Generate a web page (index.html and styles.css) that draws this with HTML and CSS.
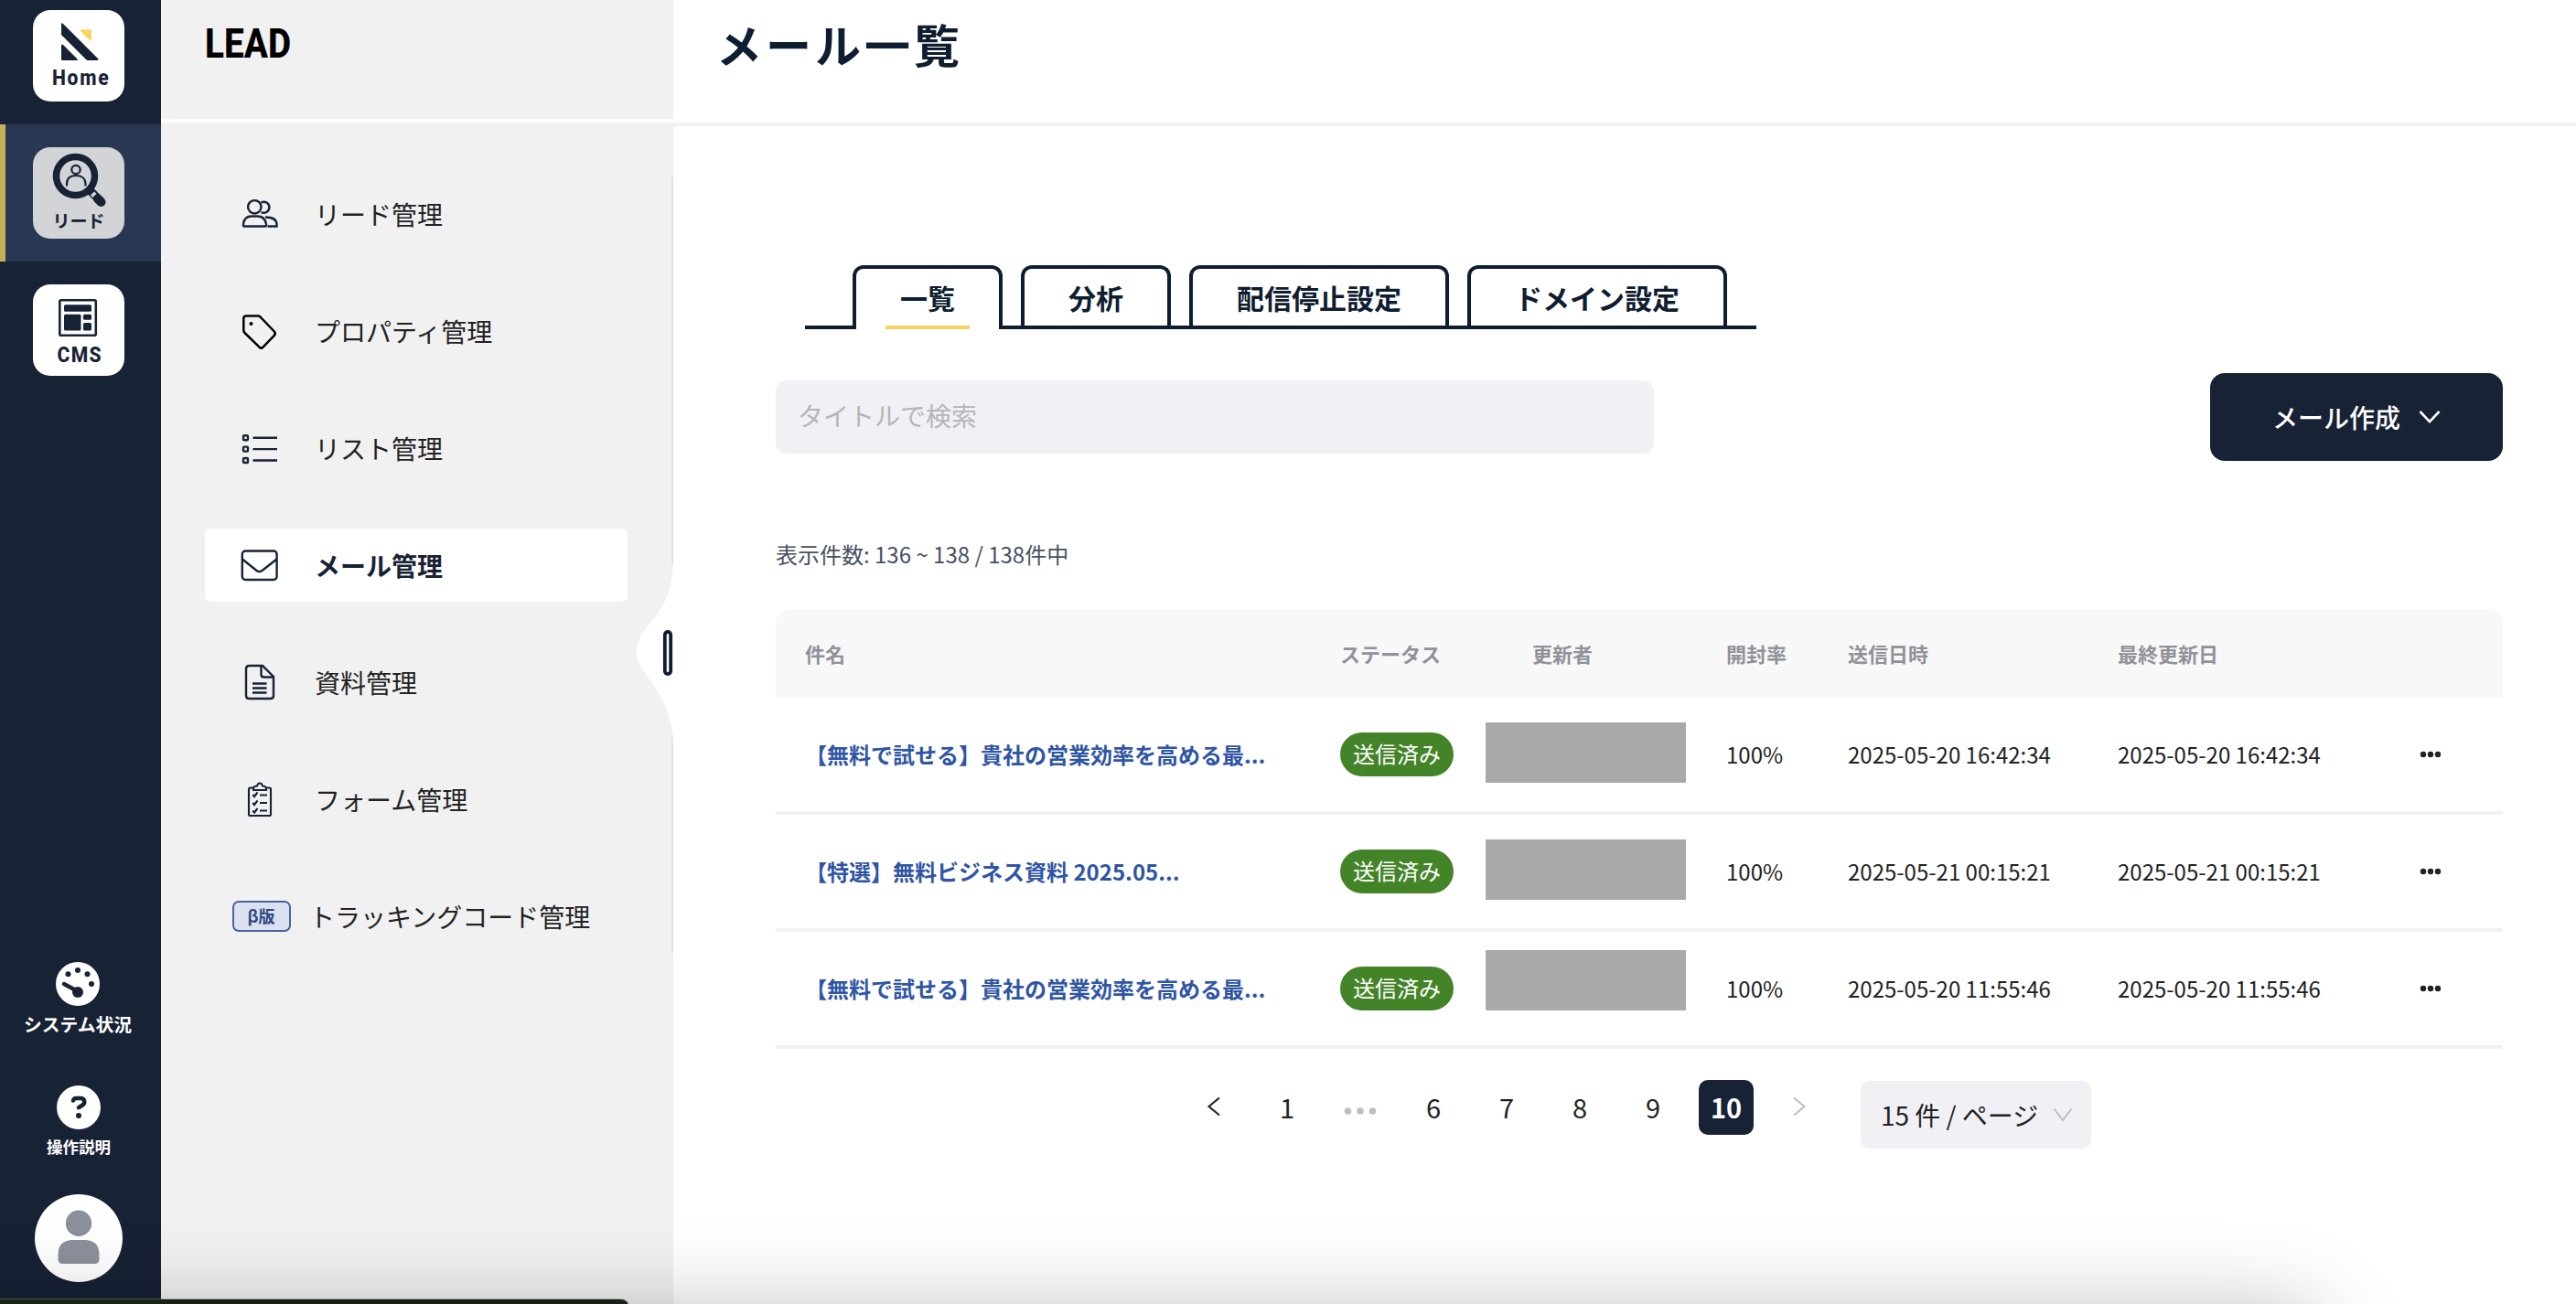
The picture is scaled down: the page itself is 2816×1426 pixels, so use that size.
FILE: index.html
```html
<!DOCTYPE html>
<html lang="ja">
<head>
<meta charset="utf-8">
<title>メール一覧</title>
<link rel="stylesheet" href="styles.css">
</head>
<body>
<div class="app">
  <nav class="rail">
    <a class="rail-item rail-home"><span class="tile">
      <svg class="tile-icon" width="100" height="100" viewBox="0 0 100 100">
        <path d="M31 15.500Q31 13.500 33 15L71.500 53.500Q72 55 70 55H60.500Q59 55 58 54L31 27Z" fill="#182235"/>
        <path d="M31 39Q31 36.500 33 38L48.500 53.500Q49.500 55 48 55H32Q31 55 31 54Z" fill="#182235"/>
        <path d="M52 21.500H63Q64 21.500 64 22.500V33Q63.500 34 62 33L52 23Q51 21.500 52 21.500Z" fill="#f6d560"/>
      </svg><span class="tile-label latin">Home</span></span></a>
    <a class="rail-item active"><span class="tile">
      <svg class="tile-icon" width="100" height="100" viewBox="0 0 100 100" fill="none" stroke="#182235">
        <circle cx="46.500" cy="31.500" r="21" stroke-width="7.500"/>
        <circle cx="47" cy="24.500" r="4.700" stroke-width="2.200"/>
        <path d="M37 42.500V40C37 34 41 31 47 31S57.500 34 57.500 40v2.500" stroke-width="2.200"/>
        <path d="M61 46l14 14" stroke-width="9"/>
        <path d="M65 50.500l2.500 2.500" stroke="#d3d4d8" stroke-width="6"/>
        <path d="M71 56.500l3.500 3.500" stroke-width="10" stroke-linecap="round"/>
      </svg><span class="tile-label kana">リード</span></span></a>
    <a class="rail-item"><span class="tile">
      <svg class="tile-icon" width="100" height="100" viewBox="0 0 100 100" fill="#182235">
        <rect x="29.300" y="17.300" width="39.500" height="38.500" rx="1.500" fill="none" stroke="#182235" stroke-width="2.600"/>
        <rect x="34" y="22.300" width="30" height="7.500" rx="1.500"/><rect x="34" y="32.800" width="18.500" height="17.700" rx="1.500"/>
        <rect x="55" y="32.800" width="9" height="6" rx="1.500"/><rect x="55" y="42" width="9" height="8.500" rx="1.500"/>
      </svg><span class="tile-label latin cms">CMS</span></span></a>
    <div class="rail-foot">
      <a class="rail-link">
        <svg class="gauge" width="48" height="48" viewBox="0 0 48 48"><circle cx="24" cy="24" r="24" fill="#fff"/>
          <g fill="#182235"><circle cx="24" cy="9" r="3"/><circle cx="13.500" cy="13.300" r="3"/><circle cx="34.500" cy="13.300" r="3"/><circle cx="39" cy="24" r="3"/><circle cx="24" cy="33" r="6"/></g>
          <path d="M9 24l13 7" stroke="#182235" stroke-width="4.500" stroke-linecap="round"/></svg>
        <span class="rail-text">システム状況</span></a>
      <a class="rail-link help">
        <svg width="48" height="48" viewBox="0 0 48 48"><circle cx="24" cy="24" r="24" fill="#fff"/>
          <path d="M18 16.500q.6-2.500 3.500-2.500h4.500c4.800 0 5.800 5.800 1.500 8l-3.500 2.200" fill="none" stroke="#182235" stroke-width="4.500" stroke-linecap="round" stroke-linejoin="round"/><circle cx="24" cy="33" r="3" fill="#182235"/></svg>
        <span class="rail-text small">操作説明</span></a>
      <svg class="avatar" width="96" height="96" viewBox="0 0 96 96"><circle cx="48" cy="48" r="48" fill="#fff"/><g fill="#8c909b"><circle cx="48" cy="31.700" r="14.200"/><path d="M40 50h16q14.500 1 14.500 16v5q0 5-5 5h-35q-5 0-5-5v-5q0-15 14.500-16z"/></g></svg>
    </div>
  </nav>

  <aside class="sidebar">
    <div class="sidebar-head"><span class="brand">LEAD</span></div>
    <ul class="menu">
      <li class="menu-item"><span class="menu-icon"><svg width="44" height="44" viewBox="0 0 44 44" fill="none" stroke="#182235" stroke-width="2.400">
        <ellipse cx="16.300" cy="13.300" rx="7.200" ry="7.200"/><path d="M4 33.500v-1.500Q5 23.500 13 23.500h6.500q8 0 9.500 8.500v1.500q0 1-1 1H5q-1 0-1-1z"/>
        <path d="M23.500 8.500a6 6 0 1 1 0 10.500M28 24.500c7 0 12.500 1.500 12.500 8v2h-10"/></svg></span><span>リード管理</span></li>
      <li class="menu-item"><span class="menu-icon"><svg width="44" height="44" viewBox="0 0 44 44" fill="none" stroke="#000" stroke-width="2.500">
        <path d="M7 4.500h13q1.500 0 2.500 1l15.300 16q2 2.200 0 4.300l-12.500 13q-1.700 1.700-3.500 0L5.500 23q-1.200-1.200-1.200-2.700V7.200Q4.300 4.500 7 4.500Z"/><circle cx="12.500" cy="13" r="2" fill="#000" stroke="none"/></svg></span><span>プロパティ管理</span></li>
      <li class="menu-item"><span class="menu-icon"><svg width="44" height="44" viewBox="0 0 44 44" fill="none" stroke="#182235" stroke-width="2.400">
        <rect x="4" y="7.200" width="5" height="5" rx="1"/><rect x="4" y="19.600" width="5" height="5" rx="1"/><rect x="4" y="32" width="5" height="5" rx="1"/><path d="M14.500 9.700H41M14.500 22.100H41M14.500 34.500H41"/></svg></span><span>リスト管理</span></li>
      <li class="menu-item selected"><span class="menu-icon"><svg width="44" height="44" viewBox="0 0 44 44" fill="none" stroke="#182235" stroke-width="2.400">
        <rect x="2.800" y="5.500" width="37.800" height="31.500" rx="3.500"/><path d="M3 14.500l15.500 12.500q3 2.200 6 0L40.500 14.500"/></svg></span><span>メール管理</span></li>
      <li class="menu-item"><span class="menu-icon"><svg width="44" height="44" viewBox="0 0 44 44" fill="none" stroke="#182235" stroke-width="2.400">
        <path d="M25 3H10.500Q7 3 7 6.500v29Q7 39 10.500 39h23Q37 39 37 35.500V15z"/><path d="M23.500 3v9.500q0 3 3 3H37M14 22.500h15.500M14 27.500h15.500M14 32.500h15.500"/></svg></span><span>資料管理</span></li>
      <li class="menu-item"><span class="menu-icon"><svg width="44" height="44" viewBox="0 0 44 44" fill="none" stroke="#182235" stroke-width="2.100">
        <path d="M14.500 8.500h-3Q10 8.500 10 10v27.500q0 1.500 1.500 1.500h21q1.500 0 1.500-1.500V10q0-1.500-1.500-1.500h-3"/><path d="M15 11V8.500q1-2 4-2 .7-3 3-3t3 3q3 0 4 2V11z"/><path d="M14.300 16l1.800 2 3.400-4.500M14.300 25l1.800 2 3.400-4.500M14.300 33.500l1.800 2 3.400-4.500M22 16.500h8M22 25h8M22 33.500h8"/></svg></span><span>フォーム管理</span></li>
      <li class="menu-item beta"><span class="beta-tag">β版</span><span>トラッキングコード管理</span></li>
    </ul>
    <svg class="notch" width="42" height="848" viewBox="0 0 42 848"><path d="M41 0V424M41 609V848" stroke="#e3e3e3" stroke-width="2"/>
      <path d="M42 415C42 460 26 476 13 492C-2 510-2 526 13 545C26 562 42 586 42 620Z" fill="#fff"/><rect x="32.800" y="497" width="6.400" height="46" rx="3.200" fill="#fff" stroke="#0f1d30" stroke-width="3.800"/></svg>
  </aside>

  <main class="main">
    <header class="page-head"><h1>メール一覧</h1></header>
    <div class="tabs"><a class="tab current">一覧</a><a class="tab">分析</a><a class="tab">配信停止設定</a><a class="tab">ドメイン設定</a></div>
    <div class="toolbar"><div class="search">タイトルで検索</div>
      <div class="create"><span>メール作成</span><svg width="24" height="16" viewBox="0 0 24 16" fill="none" stroke="#fff" stroke-width="2.600"><path d="M1.500 2L12 13.200 22.500 2"/></svg></div></div>
    <p class="count">表示件数: 136 ~ 138 / 138件中</p>
    <div class="table">
      <div class="row head"><span>件名</span><span>ステータス</span><span class="updater">更新者</span><span>開封率</span><span>送信日時</span><span>最終更新日</span><span></span></div>
      <div class="row"><span class="subject">【無料で試せる】貴社の営業効率を高める最...</span><span class="status">送信済み</span><span class="mask"></span><span>100%</span><span>2025-05-20 16:42:34</span><span>2025-05-20 16:42:34</span><svg width="24" height="8" viewBox="0 0 24 8" fill="#222"><circle cx="4" cy="4" r="3.200"/><circle cx="12" cy="4" r="3.200"/><circle cx="20" cy="4" r="3.200"/></svg></div>
      <div class="row"><span class="subject">【特選】無料ビジネス資料 2025.05...</span><span class="status">送信済み</span><span class="mask"></span><span>100%</span><span>2025-05-21 00:15:21</span><span>2025-05-21 00:15:21</span><svg width="24" height="8" viewBox="0 0 24 8" fill="#222"><circle cx="4" cy="4" r="3.200"/><circle cx="12" cy="4" r="3.200"/><circle cx="20" cy="4" r="3.200"/></svg></div>
      <div class="row"><span class="subject">【無料で試せる】貴社の営業効率を高める最...</span><span class="status">送信済み</span><span class="mask raised"></span><span>100%</span><span>2025-05-20 11:55:46</span><span>2025-05-20 11:55:46</span><svg width="24" height="8" viewBox="0 0 24 8" fill="#222"><circle cx="4" cy="4" r="3.200"/><circle cx="12" cy="4" r="3.200"/><circle cx="20" cy="4" r="3.200"/></svg></div>
    </div>
    <div class="pager">
      <span class="page arrow"><svg width="16" height="22" viewBox="0 0 16 22" fill="none" stroke="#222" stroke-width="2.100"><path d="M14 1.500L2.500 11 14 20.500"/></svg></span>
      <span class="page">1</span>
      <span class="page dots"><svg width="36" height="8" viewBox="0 0 36 8" fill="#bfbfbf"><circle cx="4.500" cy="4" r="3.800"/><circle cx="18" cy="4" r="3.800"/><circle cx="31.500" cy="4" r="3.800"/></svg></span>
      <span class="page">6</span><span class="page">7</span><span class="page">8</span><span class="page">9</span><span class="page on">10</span>
      <span class="page arrow"><svg width="16" height="22" viewBox="0 0 16 22" fill="none" stroke="#bfbfbf" stroke-width="2.100"><path d="M2 1.500L13.500 11 2 20.500"/></svg></span>
      <div class="size"><span>15 件 / ページ</span><svg width="22" height="16" viewBox="0 0 22 16" fill="none" stroke="#bfbfbf" stroke-width="2"><path d="M1.500 1.500L11 14 20.500 1.500"/></svg></div>
    </div>
  </main>
  <div class="under-shadow"></div>
  <div class="under-window"></div>
</div>
</body>
</html>
```
FILE: styles.css
```css
* { box-sizing: border-box; }
body { margin: 0; font-family: "Noto Sans CJK JP", sans-serif; color: #222; background: #fff; }
svg { display: block; flex: none; }
.app { position: relative; display: flex; width: 2816px; height: 1426px; overflow: hidden; }

.rail { width: 176px; flex: none; background: #182235; display: flex; flex-direction: column; }
.rail-item { height: 150px; padding: 25px 36px; border-left: 0 solid #c6b059; }
.rail-home { height: 136px; padding-top: 11px; }
.rail-item.active { background: #293852; border-left-width: 6px; padding-left: 30px; }
.tile { display: grid; width: 100px; height: 100px; border-radius: 19px; background: #fff; overflow: hidden; }
.active .tile { background: #d3d4d8; }
.tile > * { grid-area: 1 / 1; }
.tile-label { align-self: end; text-align: center; color: #182235; font-weight: 700; white-space: nowrap; }
.latin { font-family: Roboto, sans-serif; font-size: 24px; line-height: 24px; letter-spacing: 2px; padding-bottom: 14px; transform: scaleX(.88); padding-left: 6px; font-weight: 800; }
.cms { padding: 0 0 11px 3px; letter-spacing: 1.500px; }
.kana { font-size: 19px; line-height: 20px; padding-bottom: 10px; }
.rail-foot { margin-top: auto; display: flex; flex-direction: column; align-items: center; padding: 0 4px 24px 0; }
.rail-link { display: flex; flex-direction: column; align-items: center; color: #fff; }
.gauge { margin-right: 2px; }
.rail-text { font-size: 19.800px; line-height: 28px; font-weight: 700; margin: 6px 2px 0 0; }
.rail-text.small { font-size: 17.500px; margin: 5px 0 0; }
.help { margin-top: 53px; }
.avatar { margin-top: 38px; }

.sidebar { position: relative; width: 560px; flex: none; background: #f1f1f1; }
.sidebar-head { height: 134px; border-bottom: 4px solid #fff; padding: 22px 0 0 48px; }
.brand { display: inline-block; font: 800 44px/52px Roboto, sans-serif; color: #000; transform: scaleX(.88); transform-origin: 0 0; }
.menu { list-style: none; margin: 60px 0 0; padding: 0 50px 0 48px; display: flex; flex-direction: column; gap: 48px; }
.menu-item { display: flex; align-items: center; height: 80px; padding-left: 38px; border-radius: 6px; font-size: 28px; line-height: 40px; white-space: nowrap; }
.menu-icon { width: 82px; padding-top: 1px; }
.menu-item.selected { background: #fff; color: #182235; font-weight: 700; }
.menu-item.beta { padding-left: 30px; gap: 20px; }
.beta-tag { width: 64px; height: 34px; border: 2px solid #4a639d; border-radius: 7px; background: #dbe1f0; color: #2d4781; font-size: 18px; line-height: 29px; font-weight: 700; text-align: center; padding-right: 1px; }
.notch { position: absolute; right: 0; top: 194px; }

.main { flex: 1; min-width: 0; padding-right: 80px; }
.page-head { height: 138px; margin-right: -80px; border-bottom: 4px solid #f1f1f1; padding: 12px 0 0 47px; }
h1 { margin: 0; font-size: 50px; line-height: 70px; letter-spacing: 4px; color: #0f1d30; }
.tabs { display: flex; gap: 20px; width: 1040px; height: 70px; margin: 152px 0 0 144px; padding-left: 52px; border-bottom: 4px solid #0f1d30; }
.tab { height: 66px; border: 4px solid #0f1d30; border-bottom: 0; border-radius: 12px 12px 0 0; padding: 0 48px; font-size: 30px; line-height: 62px; font-weight: 700; color: #0f1d30; white-space: nowrap; }
.tab.current { position: relative; height: 70px; background: linear-gradient(#f4d45f, #f4d45f) center bottom / 92px 4px no-repeat #fff; }
.toolbar { display: flex; align-items: center; justify-content: space-between; margin: 48px 0 0 112px; }
.search { width: 960px; height: 80px; border-radius: 12px; background: #f0f0f5; padding-left: 24px; font-size: 28px; line-height: 77px; color: #b5b5b7; }
.create { width: 320px; height: 96px; border-radius: 16px; background: #182235; color: #fff; display: flex; align-items: center; gap: 20px; padding-left: 68px; font-size: 28px; font-weight: 500; }
.count { margin: 84px 0 0 112px; font-size: 24px; line-height: 36px; color: #475163; }
.table { margin: 42px 0 0 112px; }
.row { display: grid; grid-template-columns: 585px 159px 263px 133px 295px 330px auto; align-items: center; height: 128px; padding-left: 32px; border-bottom: 4px solid #f1f1f1; font-size: 24px; white-space: nowrap; }
.row > span { margin-bottom: 2px; }
.row.head { height: 97px; border: 0; border-radius: 16px 16px 0 0; background: #f8f8f8; color: #919299; font-size: 22px; font-weight: 700; }
.updater { padding-left: 51px; }
.subject { color: #2f55a4; font-weight: 700; }
.row > .status { width: 124px; height: 48px; margin-bottom: 0; border-radius: 24px; background: #448429; color: #fff; text-align: center; line-height: 46px; }
.row > .mask { width: 219px; height: 66px; background: #a9a9a9; margin-bottom: 4px; }
.row > .mask.raised { margin-bottom: 18px; }
.pager { display: flex; gap: 20px; margin: 34px 0 0 561px; }
.page { width: 60px; height: 60px; display: flex; align-items: center; justify-content: center; font-size: 29px; border-radius: 10px; padding-bottom: 2px; }
.page.on { background: #182235; color: #fff; font-weight: 700; }
.page.dots { padding: 7px 0 0; }
.size { width: 252px; height: 74px; margin: 1px 0 0 17px; border-radius: 10px; background: #f0f0f5; display: flex; align-items: center; justify-content: space-between; padding: 0 20px 0 22px; font-size: 28px; white-space: nowrap; }

/* window peeking in from below, with its cast shadow */
.under-shadow { position: absolute; left: -100px; width: 2630px; top: 1441px; height: 200px; border-radius: 20px; box-shadow: 0 0 100px rgba(0, 0, 0, .31); }
.under-window { position: absolute; left: -20px; width: 707px; top: 1421px; height: 40px; border-radius: 8px; background: #1a2216; box-shadow: 0 0 0 1px rgba(120, 125, 120, .5); }
```
